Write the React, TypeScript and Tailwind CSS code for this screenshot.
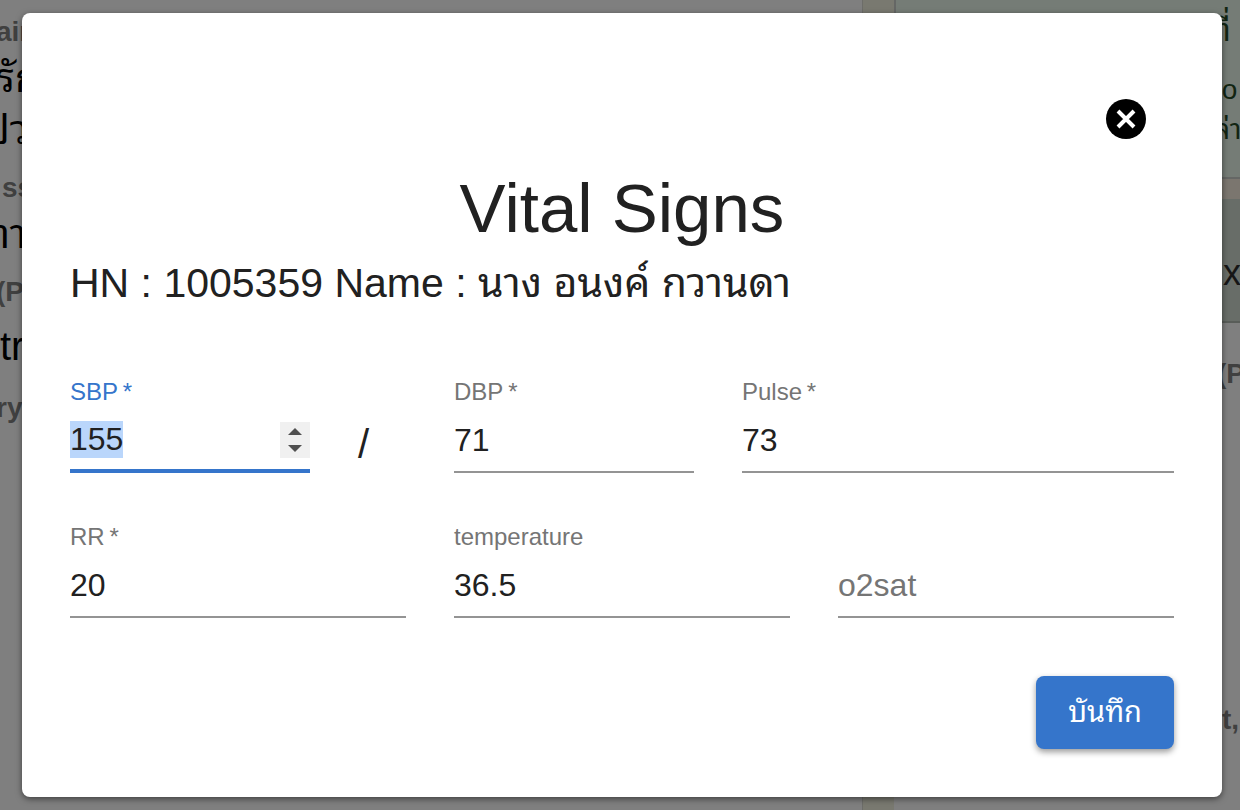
import { useEffect, useRef } from "react";

type FieldProps = {
  id: string;
  label: string;
  value?: string;
  required?: boolean;
  className: string;
};

const inputBase =
  "block h-[65px] w-full border-b-2 border-[#949494] bg-transparent pt-px text-[32px] leading-[37px] text-[#212121] outline-none placeholder:text-[#757575]";

function Field({ id, label, value, required, className }: FieldProps) {
  const floating = value !== undefined;
  return (
    <div className={className}>
      <label htmlFor={id} className="block h-8 text-2xl leading-8 text-[#757575]">
        <span className={floating ? "" : "sr-only"}>{label}</span>
        {required && <span aria-hidden="true">{"\u2009*"}</span>}
      </label>
      <input
        id={id}
        type="text"
        inputMode="decimal"
        required={required}
        defaultValue={value}
        placeholder={floating ? undefined : label}
        className={inputBase}
      />
    </div>
  );
}

function SystolicField() {
  const ref = useRef<HTMLInputElement>(null);
  useEffect(() => {
    ref.current?.focus();
    ref.current?.select();
  }, []);
  return (
    <div className="col-span-3">
      <label htmlFor="sbp" className="block h-8 text-2xl leading-8 text-[#3575cb]">
        SBP<span aria-hidden="true">{"\u2009*"}</span>
      </label>
      <div className="flex h-[65px] items-center border-b-4 border-[#3575cb] pt-0.5">
        <input
          ref={ref}
          id="sbp"
          type="number"
          required
          defaultValue="155"
          className="h-[37px] min-w-0 flex-1 [appearance:textfield] bg-transparent text-[32px] leading-[37px] text-[#212121] outline-none selection:bg-[#b9d6fb]/99 selection:text-[#212121] [&::-webkit-inner-spin-button]:appearance-none"
        />
        <div className="flex h-9 w-[30px] flex-col bg-[#f0f0f0] text-[#505050]">
          <button
            type="button"
            aria-label="Increase SBP"
            className="flex flex-1 items-end justify-center pb-1"
            onClick={() => ref.current?.stepUp()}
          >
            <svg width="14" height="8" viewBox="0 0 14 8" fill="currentColor">
              <path d="M7 0l7 7H0z" />
            </svg>
          </button>
          <button
            type="button"
            aria-label="Decrease SBP"
            className="flex flex-1 items-start justify-center pt-1"
            onClick={() => ref.current?.stepDown()}
          >
            <svg width="14" height="8" viewBox="0 0 14 8" fill="currentColor">
              <path d="M7 8l7-7H0z" />
            </svg>
          </button>
        </div>
      </div>
    </div>
  );
}

function ChartPage() {
  return (
    <div
      aria-hidden="true"
      className="absolute inset-0 flex overflow-hidden bg-[#7f7f7f] whitespace-nowrap"
    >
      <div className="flex-1 overflow-hidden text-[#404040]">
        <p className="mt-3 -ml-1 h-10 text-[28px] leading-10 font-bold">ain</p>
        <p className="-ml-1 h-[52px] text-[40px] leading-[52px] text-black">รัก</p>
        <p className="-ml-4 h-[52px] text-[40px] leading-[52px] text-black">ปวด</p>
        <p className="mt-3 ml-0.5 h-10 text-[28px] leading-10 font-bold">ss</p>
        <p className="-ml-4 h-[52px] text-[40px] leading-[52px] text-black">ทาน</p>
        <p className="-ml-1 mt-3 h-10 text-[28px] leading-10 font-bold">(PI)</p>
        <p className="mt-2 h-[52px] text-[40px] leading-[52px] text-black">tr</p>
        <p className="mt-4 -ml-1 h-10 text-[28px] leading-10 font-bold">ry</p>
      </div>
      <div className="w-8 border-l border-[#6d6d69] bg-[#797970]" />
      <div className="w-[346px] overflow-hidden text-[#404040]">
        <div className="h-[179px] border-b-2 border-l-2 border-[#656765] bg-[#757c76] pl-[318px] text-[#122512]">
          <p className="-ml-1 h-[70px] pt-1 text-[32px] leading-[52px]">ที่</p>
          <p className="h-10 text-[28px] leading-10">to</p>
          <p className="h-10 text-[28px] leading-10">ล่าง</p>
        </div>
        <div className="h-5 bg-[#7b766f]" />
        <div className="h-[124px] border-b-2 border-[#595d59] bg-[#686d68] pl-[329px] pt-12 text-4xl leading-[52px] text-[#161616]">
          x
        </div>
        <p className="mt-[31px] pl-[323px] text-[28px] leading-10 font-bold">(PI)</p>
        <p className="mt-[306px] pl-[328px] text-[28px] leading-10 font-bold">t,</p>
      </div>
    </div>
  );
}

export default function App() {
  return (
    <div className="relative min-h-screen overflow-hidden pt-[13px] pr-[18px] pb-[13px] pl-[22px] font-['Liberation_Sans','Noto_Sans_Thai_Looped','Loma','Noto_Sans_Thai','Noto_Sans',sans-serif]">
      <ChartPage />
      <main
        role="dialog"
        aria-labelledby="dialog-title"
        className="relative rounded-lg bg-white px-12 pb-12 text-[#212121] shadow-[0_2px_6px_rgba(0,0,0,0.5)]"
      >
        <div className="flex justify-end pt-[86px] pr-7">
          <button type="button" aria-label="Close" className="size-10">
            <svg viewBox="0 0 40 40" className="size-10">
              <circle cx="20" cy="20" r="20" fill="#000" />
              <path
                d="M12 12L28 28M28 12L12 28"
                stroke="#fff"
                strokeWidth="4"
              />
            </svg>
          </button>
        </div>
        <h1
          id="dialog-title"
          className="mt-7 h-[84px] text-center text-[69px] leading-[84px]"
        >
          Vital Signs
        </h1>
        <h2 className="h-16 text-[41px] leading-16">
          HN : 1005359 Name : นาง อนงค์ กวานดา
        </h2>
        <form onSubmit={(e) => e.preventDefault()}>
          <div className="mt-[61px] grid grid-cols-12 gap-x-12 gap-y-12">
            <SystolicField />
            <div className="col-span-1 pt-12 text-[40px] leading-10">/</div>
            <Field id="dbp" label="DBP" value="71" required className="col-span-3" />
            <Field id="pulse" label="Pulse" value="73" required className="col-span-5" />
            <Field id="rr" label="RR" value="20" required className="col-span-4" />
            <Field id="temp" label="temperature" value="36.5" className="col-span-4" />
            <Field id="o2sat" label="o2sat" className="col-span-4" />
          </div>
          <div className="mt-[58px] flex justify-end">
            <button
              type="submit"
              className="h-[73px] rounded-lg bg-[#3575cb] px-8 text-[29px] leading-[49px] text-white shadow-[0_3px_6px_rgba(0,0,0,0.4)]"
            >
              บันทึก
            </button>
          </div>
        </form>
      </main>
    </div>
  );
}
